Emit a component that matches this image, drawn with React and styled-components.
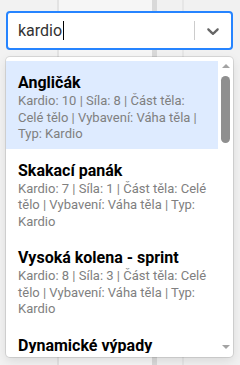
import React from "react";
import styled, { createGlobalStyle } from "styled-components";

const GlobalStyle = createGlobalStyle`
  html, body {
    margin: 0;
    padding: 0;
  }
  body {
    width: 240px;
    height: 365px;
    overflow: hidden;
    font-family: Roboto, "Noto Sans", sans-serif;
    background: linear-gradient(
      to right,
      #f2f2f2 0 57px,
      #e3e3e3 57px 59px,
      #f6f6f6 59px 152px,
      #d9d9d9 152px 157px,
      #f1f1f1 157px 182px,
      #e6e6e6 182px 184px,
      #f1f1f1 184px
    );
  }
`;

const Page = styled.div`
  padding: 11px 7px 0 6px;
`;

const Control = styled.div`
  box-sizing: border-box;
  height: 39px;
  display: flex;
  align-items: center;
  background: #fff;
  border: 2px solid #2684ff;
  border-radius: 4px;
`;

const ValueArea = styled.div`
  flex: 1;
  padding-left: 10px;
  font-size: 16px;
  color: #333;
  display: flex;
  align-items: center;
`;

const Caret = styled.span`
  display: inline-block;
  width: 1px;
  height: 19px;
  background: #000;
  margin-left: 1px;
`;

const Separator = styled.span`
  align-self: stretch;
  width: 1px;
  margin: 8px 0;
  background: #ccc;
`;

const Indicator = styled.div`
  display: flex;
  padding: 8px;
  color: #666;
`;

const Menu = styled.div`
  margin-top: 7px;
  height: 300px;
  display: flex;
  background: #fff;
  border-radius: 4px;
  box-shadow: 0 0 0 1px rgba(0, 0, 0, 0.1), 0 4px 11px rgba(0, 0, 0, 0.1);
  overflow: hidden;
`;

const List = styled.div`
  flex: 1;
  margin: 4px 0;
  overflow: hidden;
`;

const Option = styled.div`
  padding: 12px 12px 6px;
  background: ${(p) => (p.$active ? "#deebff" : "transparent")};
`;

const Title = styled.div`
  font-size: 16px;
  font-weight: 700;
  line-height: 20px;
  color: #000;
`;

const Detail = styled.div`
  font-size: 13px;
  line-height: 16.5px;
  color: #808080;
  white-space: nowrap;
`;

const ScrollBar = styled.div`
  width: 15px;
  display: flex;
  flex-direction: column;
  align-items: center;
  padding: 7px 0 8px;
  box-sizing: border-box;
`;

const Arrow = styled.span`
  width: 0;
  height: 0;
  border-left: 4px solid transparent;
  border-right: 4px solid transparent;
  ${(p) =>
    p.$down
      ? "border-top: 4px solid #a3a3a3; margin-top: auto;"
      : "border-bottom: 4px solid #a3a3a3;"}
`;

const Thumb = styled.span`
  margin-top: 8px;
  width: 9px;
  height: 67px;
  border-radius: 5px;
  background: #8f8f8f;
`;

// radky popisu jsou zalomene jako v originale
const exercises = [
  {
    name: "Angličák",
    lines: [
      "Kardio: 10 | Síla: 8 | Část těla:",
      "Celé tělo | Vybavení: Váha těla |",
      "Typ: Kardio",
    ],
  },
  {
    name: "Skakací panák",
    lines: [
      "Kardio: 7 | Síla: 1 | Část těla: Celé",
      "tělo | Vybavení: Váha těla | Typ:",
      "Kardio",
    ],
  },
  {
    name: "Vysoká kolena - sprint",
    lines: [
      "Kardio: 8 | Síla: 3 | Část těla: Celé",
      "tělo | Vybavení: Váha těla | Typ:",
      "Kardio",
    ],
  },
  {
    name: "Dynamické výpady",
    lines: [
      "Kardio: 7 | Síla: 6 | Část těla: Celé",
      "tělo | Vybavení: Váha těla | Typ:",
      "Kardio",
    ],
  },
];

const Chevron = () => (
  <svg width="20" height="20" viewBox="0 0 20 20" fill="currentColor">
    <path d="M4.516 7.548c0.436-0.446 1.043-0.481 1.576 0l3.908 3.747 3.908-3.747c0.533-0.481 1.141-0.446 1.574 0 0.436 0.445 0.408 1.197 0 1.615-0.406 0.418-4.695 4.502-4.695 4.502-0.217 0.223-0.502 0.335-0.787 0.335s-0.57-0.112-0.789-0.335c0 0-4.287-4.084-4.695-4.502s-0.436-1.17 0-1.615z" />
  </svg>
);

export default function App() {
  return (
    <Page>
      <GlobalStyle />
      <Control>
        <ValueArea>
          kardio
          <Caret />
        </ValueArea>
        <Separator />
        <Indicator>
          <Chevron />
        </Indicator>
      </Control>
      <Menu>
        <List>
          {exercises.map((ex, i) => (
            <Option key={ex.name} $active={i === 0}>
              <Title>{ex.name}</Title>
              {ex.lines.map((line) => (
                <Detail key={line}>{line}</Detail>
              ))}
            </Option>
          ))}
        </List>
        <ScrollBar>
          <Arrow />
          <Thumb />
          <Arrow $down />
        </ScrollBar>
      </Menu>
    </Page>
  );
}
